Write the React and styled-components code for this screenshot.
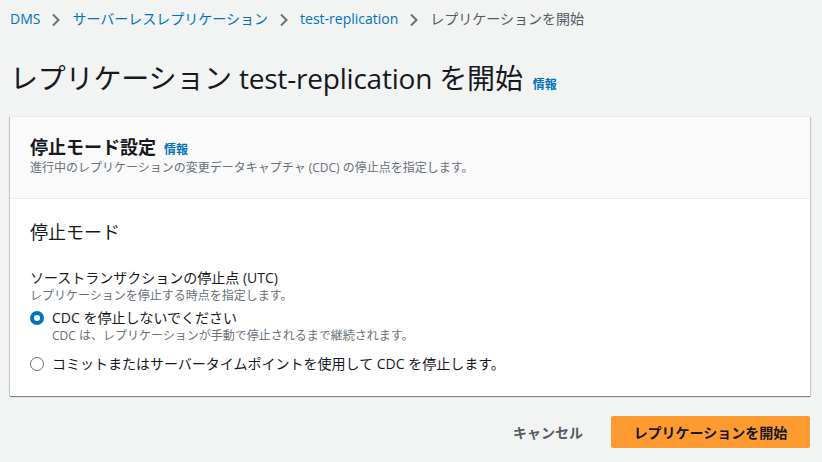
import React from 'react';
import styled, { createGlobalStyle } from 'styled-components';

const GlobalStyle = createGlobalStyle`
  body {
    margin: 0;
    background: #f2f3f3;
    font-family: "Open Sans", "Noto Sans CJK JP", sans-serif;
    color: #16191f;
  }
`;

const Page = styled.div`
  width: 822px;
  height: 462px;
  padding: 0 12px 0 10px;
  box-sizing: border-box;
  display: flex;
  flex-direction: column;
`;

const Crumbs = styled.nav`
  display: flex;
  align-items: center;
  height: 38px;
  font-size: 14px;
`;

const Crumb = styled.span`
  color: ${(p) => (p.$current ? '#545b64' : '#0073bb')};
  line-height: 20px;
`;

const Chevron = styled.svg`
  width: 16px;
  height: 16px;
  margin: 1px 8px 0 8px;
  flex: none;
`;

const TitleRow = styled.div`
  display: flex;
  align-items: baseline;
  gap: 10px;
  margin-top: 20px;
  height: 40px;
`;

const Title = styled.h1`
  margin: 0;
  font-size: 28px;
  font-weight: 400;
  line-height: 40px;
  letter-spacing: -0.2px;
`;

const Info = styled.a`
  color: #0073bb;
  font-size: 12px;
  font-weight: 700;
`;

const Card = styled.section`
  margin-top: 18px;
  background: #fff;
  box-shadow: 0 1px 1px 0 rgba(0, 28, 36, 0.3), 1px 1px 1px 0 rgba(0, 28, 36, 0.15),
    -1px 1px 1px 0 rgba(0, 28, 36, 0.15);
  border-top: 1px solid #eaeded;
`;

const CardHeader = styled.header`
  background: #fafafa;
  border-bottom: 1px solid #eaeded;
  padding: 17px 20px 20px;
  height: 82px;
  box-sizing: border-box;
`;

const HeaderTitle = styled.div`
  display: flex;
  align-items: baseline;
  gap: 8px;
  h2 {
    margin: 0;
    font-size: 18px;
    font-weight: 700;
    line-height: 26px;
  }
`;

const Desc = styled.p`
  margin: 0;
  font-size: 12px;
  line-height: 16px;
  color: #687078;
`;

const CardBody = styled.div`
  padding: 19px 20px 22px;
`;

const SectionTitle = styled.h3`
  margin: 0 0 22px;
  font-size: 18px;
  font-weight: 400;
  line-height: 28px;
`;

const Label = styled.div`
  font-size: 14px;
  line-height: 20px;
`;

const Options = styled.div`
  display: flex;
  flex-direction: column;
  gap: 10px;
  margin-top: 4px;
`;

const Option = styled.label`
  display: grid;
  grid-template-columns: 14px 1fr;
  column-gap: 8px;
  align-items: start;
`;

const RadioDot = styled.span`
  width: 14px;
  height: 14px;
  margin-top: 3px;
  box-sizing: border-box;
  border-radius: 50%;
  border: ${(p) => (p.$checked ? '4px solid #0073bb' : '1px solid #687078')};
  background: #fff;
`;

const OptionText = styled.div`
  font-size: 14px;
  line-height: 20px;
`;

const Actions = styled.div`
  display: flex;
  justify-content: flex-end;
  align-items: center;
  gap: 28px;
  margin-top: 20px;
`;

const LinkButton = styled.button`
  background: none;
  border: none;
  font: inherit;
  font-size: 14px;
  font-weight: 700;
  color: #545b64;
  padding: 0;
`;

const PrimaryButton = styled.button`
  background: #fe9a2f;
  border: none;
  border-radius: 2px;
  height: 32px;
  width: 199px;
  font: inherit;
  font-size: 14px;
  font-weight: 700;
  color: #16191f;
`;

const Arrow = () => (
  <Chevron viewBox="0 0 16 16" fill="none" stroke="#687078" strokeWidth="2">
    <path d="M5 2.5l5.5 5.5-5.5 5.5" />
  </Chevron>
);

export default function App() {
  return (
    <Page>
      <GlobalStyle />
      <Crumbs>
        <Crumb>DMS</Crumb>
        <Arrow />
        <Crumb>サーバーレスレプリケーション</Crumb>
        <Arrow />
        <Crumb>test-replication</Crumb>
        <Arrow />
        <Crumb $current>レプリケーションを開始</Crumb>
      </Crumbs>

      <TitleRow>
        <Title>レプリケーション test-replication を開始</Title>
        <Info>情報</Info>
      </TitleRow>

      <Card>
        <CardHeader>
          <HeaderTitle>
            <h2>停止モード設定</h2>
            <Info>情報</Info>
          </HeaderTitle>
          <Desc>進行中のレプリケーションの変更データキャプチャ (CDC) の停止点を指定します。</Desc>
        </CardHeader>
        <CardBody>
          <SectionTitle>停止モード</SectionTitle>
          <Label>ソーストランザクションの停止点 (UTC)</Label>
          <Desc>レプリケーションを停止する時点を指定します。</Desc>
          <Options>
            <Option>
              <RadioDot $checked />
              <div>
                <OptionText>CDC を停止しないでください</OptionText>
                <Desc>CDC は、レプリケーションが手動で停止されるまで継続されます。</Desc>
              </div>
            </Option>
            <Option>
              <RadioDot />
              <OptionText>コミットまたはサーバータイムポイントを使用して CDC を停止します。</OptionText>
            </Option>
          </Options>
        </CardBody>
      </Card>

      <Actions>
        <LinkButton>キャンセル</LinkButton>
        <PrimaryButton>レプリケーションを開始</PrimaryButton>
      </Actions>
    </Page>
  );
}
